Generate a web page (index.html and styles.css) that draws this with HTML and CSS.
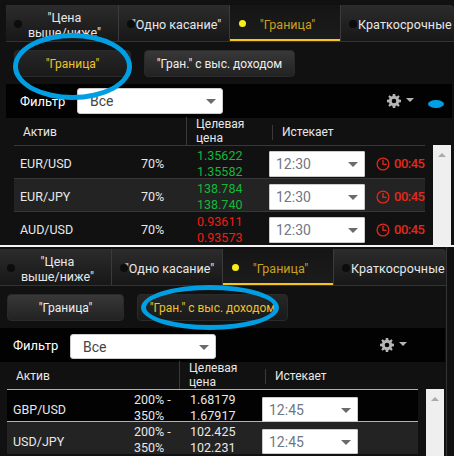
FILE: index.html
```html
<!DOCTYPE html>
<html lang="ru">
<head>
  <meta charset="UTF-8" />
  <title>Граница</title>
  <link rel="stylesheet" href="styles.css">
</head>
<body>

  <section class="panel panel-top">
    <div class="tabs">
      <div class="tab tab-wide"><span class="dot"></span>"Цена<br/>выше/ниже"</div>
      <div class="tab"><span class="dot"></span>"Одно касание"</div>
      <div class="tab active"><span class="dot"></span>"Граница"</div>
      <div class="tab tab-last"><span class="dot"></span>Краткосрочные</div>
    </div>

    <div class="subtabs">
      <button class="subtab subtab-short on">"Граница"</button>
      <button class="subtab subtab-long">"Гран." с выс. доходом</button>
    </div>

    <div class="filter">
      <span class="filter-label">Фильтр</span>
      <div class="pick pick-filter"><select><option>Все</option></select></div>
      <svg class="gear" viewBox="0 0 14 14"><use href="#gear"/></svg>
      <span class="caret"></span>
    </div>

    <div class="table">
      <div class="head">
        <div class="head-asset">Актив</div>
        <div class="head-price">Целевая<br/>цена</div>
        <div class="head-expire">Истекает</div>
      </div>
      <div class="body">
        <div class="rows">
          <div class="row">
            <div class="asset">EUR/USD</div>
            <div class="pct">70%</div>
            <div class="price up">1.35622<br/>1.35582</div>
            <div class="pick"><select><option>12:30</option></select></div>
            <div class="left"><svg class="clock" viewBox="0 0 14 14"><use href="#clock"/></svg>00:45</div>
          </div>
          <div class="row alt">
            <div class="asset">EUR/JPY</div>
            <div class="pct">70%</div>
            <div class="price up">138.784<br/>138.740</div>
            <div class="pick"><select><option>12:30</option></select></div>
            <div class="left"><svg class="clock" viewBox="0 0 14 14"><use href="#clock"/></svg>00:45</div>
          </div>
          <div class="row">
            <div class="asset">AUD/USD</div>
            <div class="pct">70%</div>
            <div class="price down">0.93611<br/>0.93573</div>
            <div class="pick"><select><option>12:30</option></select></div>
            <div class="left"><svg class="clock" viewBox="0 0 14 14"><use href="#clock"/></svg>00:45</div>
          </div>
        </div>
        <div class="scroll"><span class="scroll-up"></span></div>
      </div>
    </div>
  </section>

  <hr class="divider" />

  <section class="panel panel-bottom">
    <div class="tabs">
      <div class="tab tab-wide"><span class="dot"></span>"Цена<br/>выше/ниже"</div>
      <div class="tab"><span class="dot"></span>"Одно касание"</div>
      <div class="tab active"><span class="dot"></span>"Граница"</div>
      <div class="tab tab-last"><span class="dot"></span>Краткосрочные</div>
    </div>

    <div class="subtabs">
      <button class="subtab subtab-short">"Граница"</button>
      <button class="subtab subtab-long on">"Гран." с выс. доходом</button>
    </div>

    <div class="filter">
      <span class="filter-label">Фильтр</span>
      <div class="pick pick-filter"><select><option>Все</option></select></div>
      <svg class="gear" viewBox="0 0 14 14"><use href="#gear"/></svg>
      <span class="caret"></span>
    </div>

    <div class="table">
      <div class="head">
        <div class="head-asset">Актив</div>
        <div class="head-price">Целевая<br/>цена</div>
        <div class="head-expire">Истекает</div>
      </div>
      <div class="body">
        <div class="rows">
          <div class="row picked">
            <div class="asset">GBP/USD</div>
            <div class="pct">200% -<br/>350%</div>
            <div class="price">1.68179<br/>1.67917</div>
            <div class="pick"><select><option>12:45</option></select></div>
          </div>
          <div class="row alt">
            <div class="asset">USD/JPY</div>
            <div class="pct">200% -<br/>350%</div>
            <div class="price">102.425<br/>102.231</div>
            <div class="pick"><select><option>12:45</option></select></div>
          </div>
        </div>
        <div class="scroll"><span class="scroll-up"></span></div>
      </div>
    </div>
  </section>

  <!-- hand drawn marks on top of the screenshot -->
  <div class="ring ring-one"></div>
  <div class="ring ring-two"></div>
  <div class="blob"></div>

  <svg class="defs" width="0" height="0">
    <symbol id="gear" viewBox="0 0 14 14">
      <path fill="#b5b5b5" fill-rule="evenodd" d="M5.8 0h2.4l.3 2 1.2.5L11.400 1.300l1.300 1.300-1.200 1.700.5 1.200 2 .3v2.400l-2 .3-.5 1.200 1.200 1.700-1.300 1.300-1.700-1.200-1.200.5-.3 2H5.800l-.3-2-1.200-.5-1.700 1.200-1.300-1.300 1.200-1.700-.5-1.200-2-.3V5.800l2-.3.5-1.200-1.200-1.700 1.300-1.300 1.700 1.200 1.200-.5zM7 4.700a2.300 2.300 0 1 0 0 4.600 2.300 2.300 0 0 0 0-4.600z"/>
    </symbol>
    <symbol id="clock" viewBox="0 0 14 14">
      <circle cx="7" cy="7" r="5.900" fill="none" stroke="#e3291c" stroke-width="1.300"/>
      <path d="M7 3v4.300h3.600" fill="none" stroke="#e3291c" stroke-width="1.300"/>
    </symbol>
  </svg>

</body>
</html>
```

FILE: styles.css
```css
* { box-sizing: border-box; }

html, body {
  height: 456px;
  overflow: hidden;
}

body {
  position: relative;
  margin: 0;
  background-color: #111;
  color: #e8e8e8;
  font-family: Roboto, "Liberation Sans", sans-serif;
  font-size: 13px;
}

.panel {
  width: 449px;
  overflow: hidden;
}

.panel-top {
  height: 245px;
  margin-left: 5px;
  padding-top: 5px;
}

.panel-bottom {
  height: 209px;
  margin-left: -2px;
  padding-top: 2px;
  border-right: 1px solid #333;
}

.divider {
  height: 2px;
  margin: 0;
  border: none;
  background-color: #f4f4f4;
}

.tabs {
  display: grid;
  grid-template-columns: 113px 111px 111px 1fr;
  height: 37px;
  margin-left: 1px;
  border-bottom: 1px solid #333;
}

.tab {
  position: relative;
  display: flex;
  align-items: center;
  justify-content: center;
  padding: 3px 0 0 5px;
  font-size: 12.5px;
  text-align: center;
  line-height: 15px;
  background: linear-gradient(#2c2c2c, #171717);
  border-right: 1px solid #3a3a3a;
}

.tab-last {
  justify-content: flex-start;
  padding-left: 17px;
  letter-spacing: .1px;
  border-right: none;
  border-top-right-radius: 4px;
}

.tab.active {
  color: #c9a01e;
  background: linear-gradient(#151515, #1c1c1c);
  box-shadow: inset 0 -2px 0 #f7c61b;
}

.dot {
  position: absolute;
  left: 8px;
  top: 15px;
  width: 8px;
  height: 8px;
  border-radius: 50%;
  background-color: #0c0c0c;
}

.active .dot {
  left: 9px;
  width: 7px;
  height: 7px;
  background-color: #f6ee1a;
}

.subtabs {
  display: flex;
  gap: 13px;
  padding: 8px 0 7px 9px;
}

.subtab {
  height: 27px;
  padding: 0;
  color: #eee;
  font-family: inherit;
  font-size: 12px;
  background: linear-gradient(#383838, #222);
  border: 1px solid #2a2a2a;
  border-radius: 4px;
}

.subtab.on {
  color: #eec22a;
  background: linear-gradient(#262626, #1a1a1a);
}

.subtab-short { width: 117px; }
.subtab-long { width: 151px; }

.filter {
  display: flex;
  align-items: center;
  height: 34px;
  width: 446px;
  margin-left: 1px;
  padding-left: 14px;
  background-color: #020202;
  color: #fff;
}

.filter-label {
  width: 57px;
}

.pick {
  position: relative;
  width: 96px;
  height: 26px;
}

.pick-filter {
  width: 146px;
}

.pick::after {
  content: "";
  position: absolute;
  right: 7px;
  top: 11px;
  border-style: solid;
  border-width: 5px 5px 0;
  border-color: #6b6b6b transparent transparent;
}

.pick select {
  width: 100%;
  height: 100%;
  padding: 0 0 0 6px;
  appearance: none;
  color: #6f7784;
  font-family: inherit;
  font-size: 14px;
  background-color: #fff;
  border: 1px solid #ccc;
  border-radius: 1px;
}

.pick-filter select {
  padding-left: 12px;
  color: #444;
  border-radius: 3px;
}

.gear {
  width: 14px;
  height: 14px;
  margin-left: 164px;
}

.caret {
  margin-left: 5px;
  margin-bottom: 3px;
  border-style: solid;
  border-width: 4px 4px 0;
  border-color: #b5b5b5 transparent transparent;
}

.head {
  display: grid;
  grid-template-columns: 172px 86px 1fr;
  height: 27px;
  margin-left: 9px;
  font-size: 12px;
  line-height: 14px;
}

.head-asset {
  padding: 7px 0 0 9px;
}

.head-price {
  margin-top: -1px;
  padding-left: 10px;
}

.head-price,
.head-expire {
  position: relative;
}

.head-price::before,
.head-expire::before {
  content: "";
  position: absolute;
  left: 0;
  top: 0;
  bottom: 0;
  width: 1px;
  background-color: #3a3a3a;
}

.head-expire {
  padding: 7px 0 0 10px;
}

.head-expire::before {
  top: 7px;
  bottom: 5px;
}

.body {
  display: flex;
  margin-left: 9px;
}

.rows {
  width: 411px;
}

.row {
  display: grid;
  grid-template-columns: 127px 56px 72px 107px 1fr;
  align-items: center;
  height: 33px;
  padding: 2px 0 0 6px;
  border-top: 1px solid #383838;
  font-size: 12.5px;
  line-height: 16px;
}

.row.alt { background-color: #232323; }

.row.picked {
  height: 32px;
  background-color: #020202;
  border-top-color: #e8b21c;
}

.row.picked + .alt { border-top-color: #e8b21c; }

.pct,
.price,
.row .pick,
.left {
  margin-left: -6px;
}

.panel-bottom .asset,
.panel-bottom .pick {
  margin-top: 3px;
}

.panel-bottom .pick {
  height: 25px;
}

.price.up { color: #12b938; }
.price.down { color: #f01d12; }

.left {
  display: flex;
  align-items: center;
  gap: 4px;
  color: #e3291c;
  font-size: 13px;
  font-weight: 500;
  letter-spacing: -.5px;
}

.clock {
  width: 14px;
  height: 14px;
}

.scroll {
  width: 18px;
  height: 120px;
  margin-left: 8px;
  background-color: #efefef;
}

.scroll-up {
  display: block;
  width: 0;
  margin: 8px auto 0;
  border-style: solid;
  border-width: 0 4px 4px;
  border-color: transparent transparent #aaa;
}

.defs {
  position: absolute;
}

.ring {
  position: absolute;
  border: 5px solid #009fe3;
  border-radius: 50%;
}

.ring-one {
  left: 13px;
  top: 33px;
  width: 119px;
  height: 67px;
}

.ring-two {
  left: 141px;
  top: 285px;
  width: 138px;
  height: 45px;
}

.blob {
  position: absolute;
  left: 428px;
  top: 100px;
  width: 16px;
  height: 8px;
  border-radius: 50%;
  background-color: #009fe3;
}
```
